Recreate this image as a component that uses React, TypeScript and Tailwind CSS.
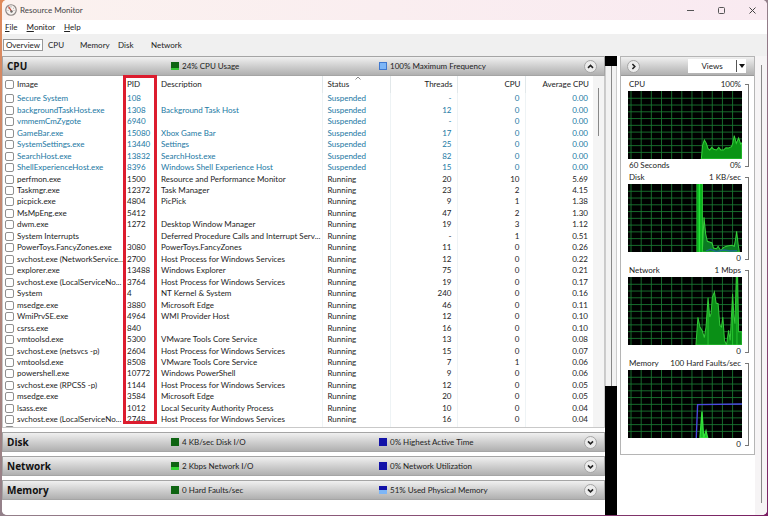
import React from "react";

type Process = [string, string, string, string, string, string];

const suspended: Process[] = [
  ["Secure System", "108", "", "-", "0", "0.00"],
  ["backgroundTaskHost.exe", "1308", "Background Task Host", "12", "0", "0.00"],
  ["vmmemCmZygote", "6940", "", "-", "0", "0.00"],
  ["GameBar.exe", "15080", "Xbox Game Bar", "17", "0", "0.00"],
  ["SystemSettings.exe", "13440", "Settings", "25", "0", "0.00"],
  ["SearchHost.exe", "13832", "SearchHost.exe", "82", "0", "0.00"],
  ["ShellExperienceHost.exe", "8396", "Windows Shell Experience Host", "15", "0", "0.00"],
];

const running: Process[] = [
  ["perfmon.exe", "1500", "Resource and Performance Monitor", "20", "10", "5.69"],
  ["Taskmgr.exe", "12372", "Task Manager", "23", "2", "4.15"],
  ["picpick.exe", "4804", "PicPick", "9", "1", "1.38"],
  ["MsMpEng.exe", "5412", "", "47", "2", "1.30"],
  ["dwm.exe", "1272", "Desktop Window Manager", "19", "3", "1.12"],
  ["System Interrupts", "-", "Deferred Procedure Calls and Interrupt Serv...", "-", "1", "0.51"],
  ["PowerToys.FancyZones.exe", "3080", "PowerToys.FancyZones", "11", "0", "0.26"],
  ["svchost.exe (NetworkService...", "2700", "Host Process for Windows Services", "12", "0", "0.22"],
  ["explorer.exe", "13488", "Windows Explorer", "75", "0", "0.21"],
  ["svchost.exe (LocalServiceNo...", "3764", "Host Process for Windows Services", "19", "0", "0.17"],
  ["System", "4", "NT Kernel & System", "240", "0", "0.16"],
  ["msedge.exe", "3880", "Microsoft Edge", "46", "0", "0.11"],
  ["WmiPrvSE.exe", "4964", "WMI Provider Host", "12", "0", "0.10"],
  ["csrss.exe", "840", "", "16", "0", "0.10"],
  ["vmtoolsd.exe", "5300", "VMware Tools Core Service", "13", "0", "0.08"],
  ["svchost.exe (netsvcs -p)", "2604", "Host Process for Windows Services", "15", "0", "0.07"],
  ["vmtoolsd.exe", "8508", "VMware Tools Core Service", "7", "1", "0.06"],
  ["powershell.exe", "10772", "Windows PowerShell", "9", "0", "0.06"],
  ["svchost.exe (RPCSS -p)", "1144", "Host Process for Windows Services", "12", "0", "0.05"],
  ["msedge.exe", "3584", "Microsoft Edge", "20", "0", "0.05"],
  ["lsass.exe", "1012", "Local Security Authority Process", "10", "0", "0.04"],
  ["svchost.exe (LocalServiceNo...", "2748", "Host Process for Windows Services", "16", "0", "0.04"],
  ["", "", "", "", "", ""],
];

const Check = ({ label }: { label: string }) => (
  <input
    type="checkbox"
    aria-label={label}
    className="size-[9px] shrink-0 appearance-none rounded-[2px] border border-[#8f8f8f] bg-white"
  />
);

const Row = ({ p, status }: { p: Process; status: string }) => (
  <tr className={status === "Suspended" ? "text-[#2178a3]" : "text-[#1c1c1c]"}>
    <td className="p-0">
      <div className="flex items-center gap-[3px] pl-[2px]">
        <Check label={p[0] || "Process"} />
        <span>{p[0]}</span>
      </div>
    </td>
    <td className="p-0 pl-[3px]">{p[1]}</td>
    <td className="border-r border-[#eef3f5] p-0 pl-[3px]">{p[2]}</td>
    <td className="border-r border-[#eef3f5] p-0 pl-[5px]">{p[0] && status}</td>
    <td className="border-r border-[#eef3f5] p-0 pr-[5px] text-right">{p[3]}</td>
    <td className="border-r border-[#eef3f5] p-0 pr-[5px] text-right">{p[4]}</td>
    <td className="p-0 pr-[5px] text-right">{p[5]}</td>
  </tr>
);

const Toggle = ({ label, d }: { label: string; d: string }) => (
  <button
    aria-label={label}
    className="flex size-[13px] shrink-0 items-center justify-center rounded-full border border-[#a5a5a5] bg-[#ececec]"
  >
    <svg viewBox="0 0 9 9" className="size-[9px]" fill="none" stroke="#222" strokeWidth="1.6">
      <path d={d} />
    </svg>
  </button>
);

const UP = "M2 5.8 4.5 3.4 7 5.8";
const DOWN = "M2 3.4 4.5 5.8 7 3.4";
const RIGHT = "M3.4 2 5.8 4.5 3.4 7";

const SectionBar = (props: {
  title: string;
  left: string;
  right: string;
  leftLevel: string;
  rightLevel: string;
  open?: boolean;
}) => (
  <header className="flex h-5 shrink-0 items-center border border-[#a5a5a5] bg-linear-to-b from-[#f0f0f0] to-[#b0b0b0] pr-[7px] pl-1 text-[8px] text-[#222]">
    <h2 className="w-[164px] font-['Open_Sans'] text-[10px] font-bold text-[#111]">{props.title}</h2>
    <span className={"mr-[3px] size-2 " + props.leftLevel} />
    <span className="w-[197px]">{props.left}</span>
    <span className={"mr-[3px] size-2 " + props.rightLevel} />
    <span className="flex-1">{props.right}</span>
    <Toggle label={(props.open ? "Collapse " : "Expand ") + props.title} d={props.open ? UP : DOWN} />
  </header>
);

const columns = [0, 1, 2, 3, 4, 5, 6, 7, 8, 9, 10];
const lines = [1, 2, 3, 4, 5, 6, 7, 8, 9];

const Graph = (props: {
  name: string;
  max: string;
  min: string;
  caption?: string;
  children: React.ReactNode;
}) => (
  <section className="flex h-[93px] gap-[3px] text-[8px] leading-3 text-[#222]">
    <div className="min-w-0 flex-1">
      <div className="flex h-[13px] justify-between pr-px pl-px">
        <h3>{props.name}</h3>
        <span>{props.max}</span>
      </div>
      <svg viewBox="0 0 339 204" preserveAspectRatio="none" className="block h-[68px] w-full bg-black">
        <g stroke="#1a7a33" strokeWidth="2.6">
          {columns.map((c) => (
            <path key={c} d={`M${9 + c * 30.2} 0V204`} />
          ))}
          {lines.map((l) => (
            <path key={l} d={`M0 ${l * 20.3 + 1.5}H339`} />
          ))}
        </g>
        {props.children}
      </svg>
      <div className="flex h-3 justify-between pr-px pl-px">
        <span>{props.caption}</span>
        <span>{props.min}</span>
      </div>
    </div>
    <div className="mt-[6px] mb-1 w-1 border-y border-r border-[#777]" />
  </section>
);

const tabs = [
  ["CPU", "w-[32px]"],
  ["Memory", "w-[38px]"],
  ["Disk", "w-[33px]"],
  ["Network", "w-[40px]"],
];

export default function App() {
  return (
    <div className="h-screen bg-linear-to-br from-[#e08a5a] via-[#93808a] to-[#7a1f63] pr-px pb-px pl-[2px] font-['Lato','Open_Sans',sans-serif]">
      <div className="flex h-full flex-col overflow-hidden rounded-[5px] bg-white">
        <div className="flex h-5 shrink-0 items-center bg-linear-to-r from-[#fbf2ef] to-[#f9eaf1] pl-[3px] text-[#444]">
          <svg viewBox="0 0 24 24" className="size-[12px]" fill="none">
            <circle cx="12" cy="12" r="10.5" fill="#f7f3f0" stroke="#8d8684" strokeWidth="2.4" />
            <path d="M6 8l2 1M12 4v3M18 8l-2 1M5 13h2M17 13h2" stroke="#999" strokeWidth="1.5" />
            <path d="M7 5l7 11" stroke="#c34b3a" strokeWidth="2.6" />
            <circle cx="13" cy="15" r="2.4" fill="#6b6b6b" />
          </svg>
          <h1 className="ml-[3px] flex-1 text-[8px]">Resource Monitor</h1>
          <div className="flex gap-[18px] pr-2">
            <button aria-label="Minimize" className="size-[13px]">
              <svg viewBox="0 0 13 13" stroke="#555"><path d="M3 6.5h7" /></svg>
            </button>
            <button aria-label="Maximize" className="size-[13px]">
              <svg viewBox="0 0 13 13" stroke="#555" fill="none"><rect x="3.5" y="3.5" width="6" height="6" rx="1" /></svg>
            </button>
            <button aria-label="Close" className="size-[13px]">
              <svg viewBox="0 0 13 13" stroke="#444"><path d="M3.5 3.5l6 6M9.5 3.5l-6 6" /></svg>
            </button>
          </div>
        </div>
        <nav className="flex h-[14px] shrink-0 items-center gap-[9px] pl-[3px] text-[8px] text-[#222]">
          <button><u>F</u>ile</button>
          <button><u>M</u>onitor</button>
          <button><u>H</u>elp</button>
        </nav>
        <div className="flex h-[22px] shrink-0 items-center bg-[#f0f0f0] pl-px text-[8px] text-[#222]">
          <button className="mr-[5px] h-3 w-[40px] border border-[#999] bg-white leading-[10px]">Overview</button>
          {tabs.map(([t, w]) => (
            <button key={t} className={"text-left " + w}>{t}</button>
          ))}
        </div>

        <div className="flex min-h-0 flex-1 bg-white">
          <main className="flex min-w-0 flex-1 flex-col gap-1 pb-[15px]">
            <div className="relative flex min-h-0 flex-1 flex-col">
              <SectionBar
                title="CPU"
                left="24% CPU Usage"
                right="100% Maximum Frequency"
                leftLevel="bg-linear-to-b from-[#0e6412] from-75% to-[#35c435] to-75%"
                rightLevel="border border-[#3f78cf] bg-[#7db6f7]"
                open
              />
              <div className="flex min-h-0 flex-1 overflow-hidden border-x border-b border-[#c9c9c9]">
                <div className="relative min-w-0 flex-1 overflow-hidden">
                  <span className="absolute top-0 left-[351px]">
                    <svg viewBox="0 0 8 4" className="block h-1 w-2" fill="none" stroke="#888"><path d="M1.5 3.5 4 1l2.500 2.500" /></svg>
                  </span>
                  <table className="h-[359px] w-full table-fixed border-collapse text-[8px] leading-[11px] whitespace-nowrap">
                    <thead>
                      <tr className="h-[17px] text-[#222]">
                        <th className="w-[121px] p-0 text-left font-normal">
                          <div className="flex items-center gap-[3px] pl-[2px]">
                            <Check label="Select all" />
                            <span>Image</span>
                          </div>
                        </th>
                        <th className="w-[34px] p-0 pl-[3px] text-left font-normal">PID</th>
                        <th className="border-r border-[#e2e8ea] p-0 pl-[3px] text-left font-normal">Description</th>
                        <th className="w-[68px] border-r border-[#e2e8ea] p-0 pl-[5px] text-left font-normal">Status</th>
                        <th className="w-[67px] border-r border-[#e2e8ea] p-0 pr-[4px] text-right font-normal">Threads</th>
                        <th className="w-[68px] border-r border-[#e2e8ea] p-0 pr-[4px] text-right font-normal">CPU</th>
                        <th className="w-[68px] p-0 pr-[4px] text-right font-normal">Average CPU</th>
                      </tr>
                    </thead>
                    <tbody>
                      {suspended.map((p) => <Row key={p[1]} p={p} status="Suspended" />)}
                      {running.map((p) => <Row key={p[1]} p={p} status="Running" />)}
                    </tbody>
                  </table>
                </div>
                <div className="flex w-[11px] justify-center bg-[#f4f4f4] pt-3">
                  <div className="h-12 w-px bg-[#888]" />
                </div>
              </div>
              <div className="pointer-events-none absolute top-[19px] bottom-[4px] left-[121px] w-[34px] border-[3px] border-[#dc1c2e]" />
            </div>
            <SectionBar title="Disk" left="4 KB/sec Disk I/O" right="0% Highest Active Time" leftLevel="bg-[#0e6412]" rightLevel="bg-[#1212a8]" />
            <SectionBar title="Network" left="2 Kbps Network I/O" right="0% Network Utilization" leftLevel="bg-linear-to-b from-[#0e6412] from-65% to-[#35d435] to-65%" rightLevel="bg-[#1212a8]" />
            <SectionBar title="Memory" left="0 Hard Faults/sec" right="51% Used Physical Memory" leftLevel="bg-[#0e6412]" rightLevel="bg-linear-to-b from-[#1212a8] from-50% to-[#7db6f7] to-50%" />
          </main>

          <div className="flex w-3 shrink-0 flex-col bg-black pt-[10px]">
            <div className="flex h-[320px] justify-center border-x border-[#ccc] bg-[#f2f2f2]">
              <div className="w-px bg-[#888]" />
            </div>
          </div>

          <aside className="flex w-[150px] shrink-0 items-start pl-[3px]">
            <div className="min-w-0 flex-1 border border-[#b5b5b5]">
              <header className="flex h-[19px] items-center justify-between border-b border-[#999] bg-linear-to-b from-[#f0f0f0] to-[#b0b0b0] pr-2 pl-[6px]">
                <Toggle label="Collapse graphs" d={RIGHT} />
                <button className="flex h-[14px] w-[58px] items-center bg-white text-[8px] text-[#222]">
                  <span className="flex-1">Views</span>
                  <span className="flex h-3 w-[10px] items-center justify-center border-l border-[#555]">
                    <svg viewBox="0 0 6 4" className="h-1 w-[6px]"><path d="M0 0h6L3 4z" fill="#111" /></svg>
                  </span>
                </button>
              </header>
              <div className="pt-[2px] pr-[5px] pb-1 pl-[7px]">
                <Graph name="CPU" max="100%" min="0%" caption="60 Seconds">
                  <path
                    d="M218 204 222 162 227 147 233 157 238 173 243 177 249 169 255 175 263 177 270 169 276 177 284 177 291 170 299 171 308 167 312 155 316 134 322 157 329 141 335 159 339 155V204Z"
                    fill="#0a9414"
                    stroke="#35d03a"
                    strokeWidth="3"
                  />
                </Graph>
                <Graph name="Disk" max="1 KB/sec" min="0">
                  <path
                    d="M205 204V0H221V204L226 100 231 150 236 172 250 177 254 192 263 194 268 187 276 200 284 190 295 186 308 184 316 187 320 165 323 142 328 185 331 204Z"
                    fill="#0a7a22"
                    stroke="#35d03a"
                    strokeWidth="3"
                  />
                  <path d="M206 0H220V204H206Z" fill="#08b41c" />
                  <path d="M212 0V204" stroke="#30f040" strokeWidth="3" />
                  <path d="M232 201 245 196 262 202 285 198 305 201 325 200" stroke="#1b6a8c" strokeWidth="4" fill="none" />
                </Graph>
                <Graph name="Network" max="1 Mbps" min="0">
                  <path
                    d="M202 204 208 121 214 150 221 162 227 182 232 150 238 62 243 120 247 110 251 60 257 45 262 78 268 80 273 145 278 150 282 120 287 190 293 204 299 160 304 190 311 50 315 120 318 140 322 0H326L329 164H339V204Z"
                    fill="#0a8f16"
                    stroke="#35c83a"
                    strokeWidth="3"
                  />
                  <path d="M324 4V204M311 70V204M238 80V204" stroke="#35e03c" strokeWidth="2" />
                </Graph>
                <Graph name="Memory" max="100 Hard Faults/sec" min="0">
                  <path d="M214 204 220 125 225 204 232 183 237 204Z" fill="#18c224" stroke="#35e03c" strokeWidth="4" />
                  <path d="M203 204 207 104 339 102" fill="none" stroke="#4a4ae0" strokeWidth="4" />
                </Graph>
              </div>
            </div>
            <div className="flex w-3 shrink-0 justify-center self-stretch bg-[#f6f4f5] pt-[9px] pb-3">
              <div className="w-px bg-[#888]" />
            </div>
          </aside>
        </div>
      </div>
    </div>
  );
}
